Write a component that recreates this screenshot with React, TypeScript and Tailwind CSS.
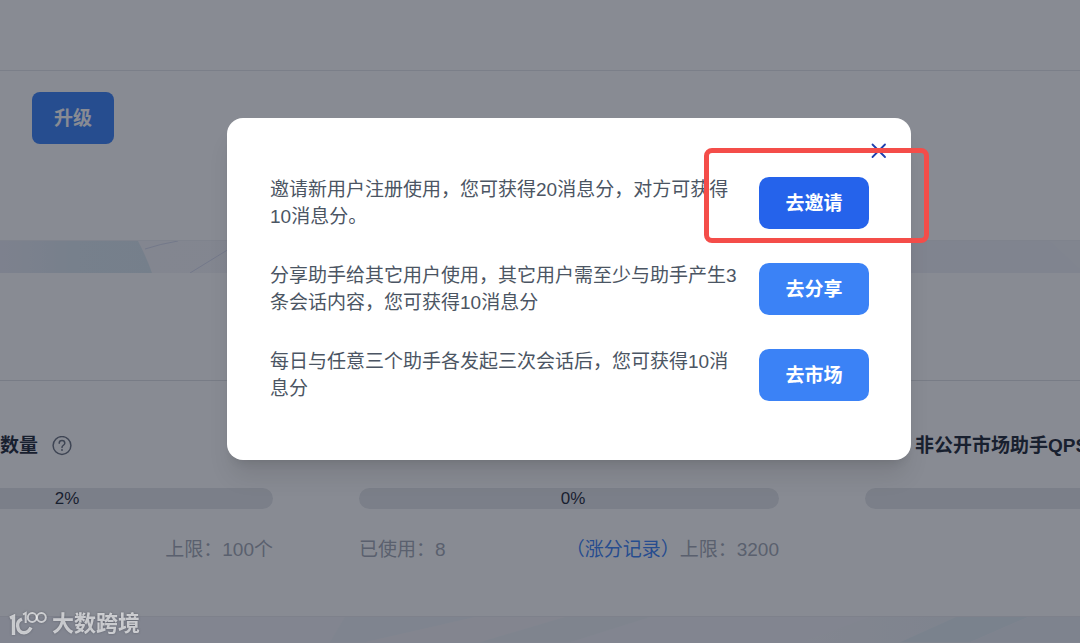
import { useState } from "react";
import type { ReactNode } from "react";

type Task = { text: string; action: string; active?: boolean };

const tasks: Task[] = [
  { text: "邀请新用户注册使用，您可获得20消息分，对方可获得10消息分。", action: "去邀请", active: true },
  { text: "分享助手给其它用户使用，其它用户需至少与助手产生3条会话内容，您可获得10消息分", action: "去分享" },
  { text: "每日与任意三个助手各发起三次会话后，您可获得10消息分", action: "去市场" },
];

function Meter({ label }: { label?: string }) {
  return (
    <div className="flex h-[21px] items-center justify-center rounded-full bg-[#e5e7eb] pl-2 text-[17px] leading-[21px] text-[#1f2937]">
      {label}
    </div>
  );
}

function Stat({ heading, percent, children }: { heading?: ReactNode; percent?: string; children?: ReactNode }) {
  return (
    <div className="flex min-w-0 flex-col">
      <div className="mb-7 flex h-7 items-center whitespace-nowrap text-[19px] font-bold text-[#1f2937]">{heading}</div>
      <Meter label={percent} />
      <div className="mt-[27px] flex h-7 items-center justify-between whitespace-nowrap text-[19px] text-[#a3a9b4]">{children}</div>
    </div>
  );
}

function HelpIcon() {
  return (
    <svg className="ml-[14px] size-5" viewBox="0 0 20 20" fill="none" stroke="#6b7280" strokeWidth="1.5" strokeLinecap="round" aria-hidden="true">
      <circle cx="10" cy="9.5" r="8.9" />
      <path d="M7.2 7.3C7.2 5.7 8.4 4.6 10 4.6S12.8 5.7 12.8 7.2C12.8 9.2 10 9.3 10 11.4" />
      <path d="M10 14v.1" strokeWidth="1.8" />
    </svg>
  );
}

function TopArt() {
  return (
    <svg className="block h-8 w-full" viewBox="0 0 1080 32" preserveAspectRatio="none" aria-hidden="true">
      <defs>
        <linearGradient id="topBlue" x1="0" x2="1">
          <stop offset="0" stopColor="#e9ebf4" />
          <stop offset="0.5" stopColor="#dce8f0" />
          <stop offset="1" stopColor="#d9e7ef" />
        </linearGradient>
        <linearGradient id="topBase" x1="0" x2="1">
          <stop offset="0" stopColor="#f5f5f8" />
          <stop offset="1" stopColor="#eef0f7" />
        </linearGradient>
      </defs>
      <rect width="1080" height="32" fill="url(#topBase)" />
      <path d="M0 0H138Q146 15 152 32H0Z" fill="url(#topBlue)" />
      <path d="M145 8Q160 3 178 0M190 32L229 8" fill="none" stroke="#d5daec" />
      <path d="M1050 0L1080 28V0Z" fill="#f1f3f7" />
    </svg>
  );
}

function BottomArt() {
  return (
    <svg className="block h-8 w-full border-t border-[#eaebef]" viewBox="0 0 1080 32" preserveAspectRatio="none" aria-hidden="true">
      <defs>
        <linearGradient id="bottomBlue" x1="0" x2="1">
          <stop offset="0" stopColor="#f3f4f8" />
          <stop offset="1" stopColor="#ecf0f5" />
        </linearGradient>
      </defs>
      <rect width="1080" height="32" fill="#f2f3f8" />
      <path d="M330 26L345 0H475L365 26Z" fill="#edf1f6" />
      <path d="M365 26L475 0H565L480 26Z" fill="#f4f3f6" />
      <path d="M480 26L565 0H650L570 26Z" fill="#edf1f5" />
      <path d="M800 26L870 0H956L900 26Z" fill="url(#bottomBlue)" />
      <path d="M900 26L956 0H1028L970 26Z" fill="#e2edf3" />
      <path d="M970 26L1028 0H1080V26Z" fill="#ebeff5" />
    </svg>
  );
}

function Brand() {
  return (
    <div className="pointer-events-none absolute bottom-1 left-[9px] z-20 flex items-center gap-[5px] text-[22px] font-bold leading-[30px] text-white/65 [filter:drop-shadow(0_0_1px_rgba(40,44,52,0.6))]">
      <svg className="h-[26px] w-[38px]" viewBox="0 -1 38 26" fill="none" stroke="currentColor" aria-hidden="true">
        <path d="M1 6L4.5 4.4V23M13 7Q8 9 8.6 14Q9.4 20.8 15 20.8Q19.5 20.6 22 15.5" strokeWidth="3.4" />
        <path d="M14 2.5L16.7 1V11" strokeWidth="2" />
        <circle cx="23.2" cy="5.5" r="4.4" strokeWidth="2" />
        <circle cx="32.4" cy="5.5" r="4.4" strokeWidth="2" />
      </svg>
      <span>大数跨境</span>
    </div>
  );
}

export default function App() {
  const [open, setOpen] = useState(true);
  return (
    <div className="relative h-screen overflow-hidden bg-white font-['Liberation_Sans','Noto_Sans_CJK_SC',sans-serif]">
      <header className="h-[71px] border-b border-[#e5e7eb]" />
      <section className="h-[170px] border-b border-[#edeff2] px-8 pt-[21px]">
        <button className="h-[52px] rounded-lg bg-[#3b82f6] px-[22px] pt-[2px] text-[19px] font-bold text-white">升级</button>
      </section>
      <TopArt />
      <section>
        <div className="h-[108px] border-b border-[#dfe1e5]" />
        <div className="-ml-[147px] -mr-[205px] grid h-[235px] grid-cols-3 gap-[86px] pt-[51px]">
          <Stat heading={<span className="flex items-center pl-[147px]">数量<HelpIcon /></span>} percent="2%">
            <span className="ml-auto">上限：100个</span>
          </Stat>
          <Stat percent="0%">
            <span>已使用：8</span>
            <span><a href="#records" className="text-[#3b82f6]">（涨分记录）</a>上限：3200</span>
          </Stat>
          <Stat heading={<span className="pl-[50px]">非公开市场助手QPS</span>} />
        </div>
      </section>
      <BottomArt />

      {open && (
        <div className="absolute inset-0 z-10 flex items-start justify-center bg-[#111827]/50 pl-[58px] pt-[118px]">
          <div role="dialog" aria-modal="true" aria-label="消息分" className="relative flex w-full max-w-[684px] flex-col gap-8 rounded-2xl bg-white py-[58px] pl-[43px] pr-[42px] shadow-xl">
            <button aria-label="关闭" onClick={() => setOpen(false)} className="absolute right-6 top-6 flex size-[18px] items-center justify-center text-[#1e40af]">
              <svg className="size-[18px]" viewBox="0 0 18 18" fill="none" stroke="currentColor" strokeWidth="1.8" strokeLinecap="round" aria-hidden="true">
                <path d="M3.5 2.5L16 15M16 2.5L3.5 15" />
              </svg>
            </button>
            {tasks.map((task) => (
              <div key={task.action} className="flex items-center gap-4">
                <p className="flex-1 text-[19px] leading-[27px] text-[#4b5563]">{task.text}</p>
                <button className={`h-[52px] w-[110px] shrink-0 rounded-[10px] pt-[2px] text-[19px] font-bold text-white ${task.active ? "bg-[#2563eb]" : "bg-[#3b82f6]"}`}>
                  {task.action}
                </button>
              </div>
            ))}
            <div className="pointer-events-none absolute -right-[18px] top-[30px] h-[95px] w-[225px] rounded-lg border-[5px] border-[#f44d49]" />
          </div>
        </div>
      )}
      <Brand />
    </div>
  );
}
